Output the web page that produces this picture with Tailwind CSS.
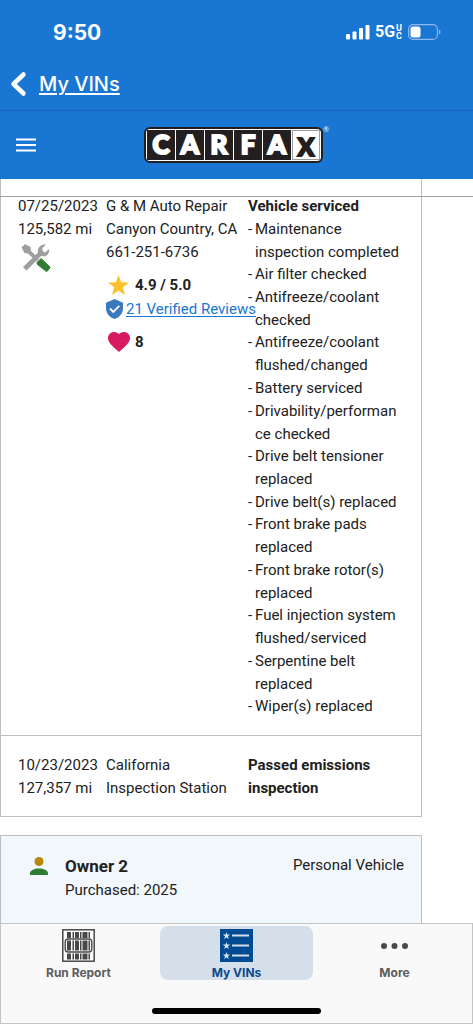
<!DOCTYPE html>
<html lang="en">
<head>
<meta charset="utf-8">
<meta name="viewport" content="width=device-width, initial-scale=1">
<title>CARFAX - My VINs</title>
<script src="https://cdn.jsdelivr.net/npm/@tailwindcss/browser@4"></script>
</head>
<body class="flex h-screen flex-col overflow-hidden bg-white font-['Roboto',sans-serif] text-[15px] leading-[23px] text-[#212121]">

<header class="shrink-0 bg-[#1976d2] font-['Inter',sans-serif] text-white">
  <div class="flex h-16 items-center justify-between pl-[53px] pr-8">
    <span class="text-[21px] font-bold">9:50</span>
    <div class="flex items-center">
      <svg class="mr-[5px]" width="24" height="16" viewBox="0 0 24 16" fill="#fff" aria-hidden="true"><rect x="0" y="10" width="4" height="5.500" rx="1"/><rect x="6.500" y="7.500" width="4" height="8" rx="1"/><rect x="13" y="4" width="4" height="11.500" rx="1"/><rect x="19.500" y="1" width="4" height="14.500" rx="1"/></svg>
      <span class="font-['Roboto',sans-serif] text-base font-bold">5G</span>
      <span class="mr-[6px] ml-px flex flex-col font-['Roboto',sans-serif] text-[9px] leading-[8px] font-bold"><span>U</span><span>C</span></span>
      <svg width="33" height="16" viewBox="0 0 33 16" aria-hidden="true"><rect x=".6" y=".6" width="28.800" height="14.800" rx="4.500" fill="none" stroke="#8bb9e9" stroke-width="1.200"/><rect x="2.500" y="2.500" width="10" height="11" rx="2.500" fill="#fff"/><path d="M31 5.500c2 .8 2 4.200 0 5z" fill="#8bb9e9"/></svg>
    </div>
  </div>
  <div class="flex h-[46px] items-center pb-[6px]">
    <a href="#" class="flex items-center text-xl font-medium underline decoration-2 underline-offset-2">
      <svg class="ml-2 mr-3" width="19" height="28" viewBox="0 0 19 28" fill="none" stroke="#fff" stroke-width="4.500" stroke-linecap="round" stroke-linejoin="round" aria-hidden="true"><path d="M15.500 4.500 5.500 14l10 9.500"/></svg>
      My VINs</a>
  </div>
  <div class="grid h-[69px] grid-cols-[1fr_auto_1fr] items-center border-t border-[#1565c0] pr-[6px]">
    <button type="button" aria-label="Menu" class="ml-4 w-5"><svg width="20" height="14" viewBox="0 0 20 14" stroke="#fff" stroke-width="2"><path d="M0 1.500h20M0 7h20M0 12.500h20"/></svg></button>
    <div class="relative flex rounded-md border-2 border-[#231f20] bg-white p-px font-['Lato',sans-serif] text-[26px] leading-[28px] font-black" role="img" aria-label="CARFAX">
      <div class="flex gap-px rounded-sm bg-white [-webkit-text-stroke:2px_currentColor]">
        <span class="w-7 bg-[#231f20] text-center">C</span><span class="w-7 bg-[#231f20] text-center">A</span><span class="w-7 bg-[#231f20] text-center">R</span><span class="w-7 bg-[#231f20] text-center">F</span><span class="w-7 bg-[#231f20] text-center">A</span><span class="w-7 border border-[#9e9e9e] bg-white pt-1 text-center text-2xl leading-6 text-[#231f20]">X</span>
      </div>
      <span class="absolute -right-2 -top-1 text-[7px] leading-[9px] font-normal">®</span>
    </div>
  </div>
</header>

<main class="relative min-h-0 flex-1 overflow-hidden">
  <div class="absolute inset-x-0 top-[17px] h-px bg-[#a0a0a0]"></div>
  <table class="w-[calc(100%-51px)] table-fixed border-separate border-spacing-0 border-x border-[#bdbdbd]">
    <colgroup><col class="w-[105px]"><col class="w-[142px]"><col></colgroup>
    <tbody class="align-top">
      <tr>
        <td class="border-b border-[#bdbdbd] pt-4 pl-[17px]">
          <div class="whitespace-nowrap">07/25/2023</div>
          <div class="whitespace-nowrap">125,582 mi</div>
          <svg class="mt-[2px] ml-[3px]" width="30" height="30" viewBox="0 0 30 30" stroke-linejoin="round" aria-hidden="true">
            <path d="M0.500 4.500 4 1l5.500 3 .5 4 8 7.500-2.500 3L7 10.500 3.500 10z" fill="#9e9e9e"/>
            <path d="M2 24 17 9.500C16 4.500 20 1 25 1.500L21.500 5v3l2.500 1.500L28 6C29 11 25 14.500 20 13L5.500 27.500z" fill="#9e9e9e"/>
            <path d="M16 19.500 20 15.500l9 8.500-.5 1.500-1 .5v1l-2 1.500-9-7z" fill="#2e7d32" stroke="#2e7d32"/>
          </svg>
        </td>
        <td class="border-b border-[#bdbdbd] pt-4">
          <div class="whitespace-nowrap">G &amp; M Auto Repair</div>
          <div class="whitespace-nowrap">Canyon Country, CA</div>
          <div>661-251-6736</div>
          <div class="mt-[9px] flex h-6 items-center font-bold">
            <svg class="ml-[2px] mr-[6px]" width="21" height="20" viewBox="0 0 21 20" fill="#fbc02d" aria-hidden="true"><path d="m10.500 0 2.600 7.200 7.900.3-6.200 4.800L17 20l-6.500-4.400L4 20l2.200-7.700L0 7.500l7.900-.3z"/></svg>4.9 / 5.0</div>
          <div class="flex h-6 items-center whitespace-nowrap">
            <svg class="mr-[3px] shrink-0" width="17" height="20" viewBox="0 0 17 20" aria-hidden="true"><path d="M8.500 0 17 3.700v5.600c0 5-3.600 9.400-8.500 10.700C3.600 18.700 0 14.300 0 9.300V3.700z" fill="#3b78bd"/><path d="m4 9.500 3.300 3.400 6-6" fill="none" stroke="#fff" stroke-width="1.800"/></svg><a href="#" class="text-[#1976d2] underline underline-offset-2">21 Verified Reviews</a></div>
          <div class="mt-[9px] flex h-6 items-center font-bold">
            <svg class="ml-[2px] mr-[5px]" width="22" height="20" viewBox="0 0 22 20" fill="#d81b60" aria-hidden="true"><path d="M11 20 9.400 18.600C3.700 13.500 0 10.200 0 6.100 0 2.700 2.700 0 6.100 0 8 0 9.800.9 11 2.300 12.200.9 14 0 15.900 0 19.300 0 22 2.700 22 6.100c0 4.100-3.700 7.400-9.400 12.500z"/></svg>8</div>
        </td>
        <td class="border-b border-[#bdbdbd] pt-4 pr-[17px] pb-[17px]">
          <div class="font-bold">Vehicle serviced</div>
          <ul>
            <li class="-mb-px flex"><span class="w-[7px] shrink-0">-</span><span>Maintenance inspection completed</span></li>
            <li class="flex"><span class="w-[7px] shrink-0">-</span><span>Air filter checked</span></li>
            <li class="-mb-px flex"><span class="w-[7px] shrink-0">-</span><span>Antifreeze/coolant checked</span></li>
            <li class="flex"><span class="w-[7px] shrink-0">-</span><span>Antifreeze/coolant flushed/changed</span></li>
            <li class="flex"><span class="w-[7px] shrink-0">-</span><span>Battery serviced</span></li>
            <li class="-mb-px flex"><span class="w-[7px] shrink-0">-</span><span class="break-all">Drivability/performance checked</span></li>
            <li class="flex"><span class="w-[7px] shrink-0">-</span><span>Drive belt tensioner replaced</span></li>
            <li class="-mb-px flex"><span class="w-[7px] shrink-0">-</span><span>Drive belt(s) replaced</span></li>
            <li class="flex"><span class="w-[7px] shrink-0">-</span><span>Front brake pads replaced</span></li>
            <li class="-mb-px flex"><span class="w-[7px] shrink-0">-</span><span>Front brake rotor(s) replaced</span></li>
            <li class="flex"><span class="w-[7px] shrink-0">-</span><span>Fuel injection system flushed/serviced</span></li>
            <li class="-mb-px flex"><span class="w-[7px] shrink-0">-</span><span>Serpentine belt replaced</span></li>
            <li class="flex"><span class="w-[7px] shrink-0">-</span><span>Wiper(s) replaced</span></li>
          </ul>
        </td>
      </tr>
      <tr>
        <td class="border-b border-[#bdbdbd] pt-[18px] pb-4 pl-[17px] whitespace-nowrap">10/23/2023<br>127,357 mi</td>
        <td class="border-b border-[#bdbdbd] pt-[18px] pb-4">California<br>Inspection Station</td>
        <td class="border-b border-[#bdbdbd] pt-[18px] pb-4 pr-[17px] font-bold">Passed emissions inspection</td>
      </tr>
    </tbody>
  </table>
  <section class="mt-[18px] mr-[51px] flex h-[120px] items-start border border-[#bdbdbd] bg-[#f2f7fc] pt-[18px] pr-[17px] pl-[29px]">
    <svg class="mt-[3px] mr-[17px]" width="18" height="18" viewBox="0 0 18 18" aria-hidden="true"><circle cx="9" cy="4.500" r="4.500" fill="#b8860b"/><path d="M0 18v-1.500C0 13 4.500 11.500 9 11.500s9 1.500 9 5V18z" fill="#2e7d32"/></svg>
    <div>
      <h2 class="text-[17px] leading-6 font-bold">Owner 2</h2>
      <p class="leading-6">Purchased: 2025</p>
    </div>
    <p class="ml-auto">Personal Vehicle</p>
  </section>
</main>

<nav class="shrink-0 border border-[#c4c4c4] bg-[#f9f9f9] px-px pt-[2px] font-['Inter',sans-serif] text-xs leading-4 font-bold text-[#5c5c5c]">
  <div class="grid grid-cols-3 gap-[5px]">
    <a href="#" class="flex h-[54px] flex-col items-center gap-[3px] pt-[3px]">
      <svg class="shrink-0" width="33" height="33" viewBox="0 0 33 33" fill="#484848" aria-hidden="true"><rect x=".8" y=".8" width="31.400" height="31.400" fill="#fff" stroke="#484848" stroke-width="1.500"/><path d="M5 3h4v6H5zM10.500 3h1.500v6h-1.500zM13 3h4v6h-4zM18 3h1.500v6h-1.500zM20.500 3h5v6h-5zM26.500 3h1.500v6h-1.500zM5 11.500h4v10H5zM10.500 11.500h1.500v10h-1.500zM13 11.500h4v10h-4zM18 11.500h1.500v10h-1.500zM20.500 11.500h5v10h-5zM26.500 11.500h1.500v10h-1.500zM5 24.500h4v6H5zM10.500 24.500h1.500v6h-1.500zM13 24.500h4v6h-4zM18 24.500h1.500v6h-1.500zM20.500 24.500h5v6h-5zM26.500 24.500h1.500v6h-1.500z"/><rect x="3.200" y="10" width="26.600" height="13" rx="3" fill="none" stroke="#484848" stroke-width="1.400"/></svg>
      <span class="whitespace-nowrap">Run Report</span></a>
    <a href="#" aria-current="page" class="flex h-[54px] flex-col items-center gap-[3px] rounded-lg bg-[#d5dfe9] pt-[3px] text-[#0b4a8f]">
      <svg class="shrink-0" width="33" height="33" viewBox="0 0 33 33" aria-hidden="true"><rect width="33" height="33" fill="#004b93"/><path d="M12 6.500h17M12 16.500h17M12 26.500h17" stroke="#d5dfe9" stroke-width="2"/><g fill="#d5dfe9"><path id="star" d="m6.500 3 .9 2.500 2.800.1-2.200 1.700.8 2.700-2.300-1.500L4.200 10 5 7.300 2.800 5.600l2.800-.1z"/><use href="#star" y="10"/><use href="#star" y="20"/></g></svg>
      <span>My VINs</span></a>
    <a href="#" class="flex h-[54px] flex-col items-center gap-[3px] pt-[3px]">
      <svg class="shrink-0" width="33" height="33" viewBox="0 0 33 33" fill="#484848" aria-hidden="true"><circle cx="6" cy="17" r="3"/><circle cx="16.500" cy="17" r="3"/><circle cx="27" cy="17" r="3"/></svg>
      <span>More</span></a>
  </div>
  <div class="mx-auto mt-7 mb-[9px] h-[6px] w-[169px] rounded-full bg-black"></div>
</nav>
</body>
</html>
